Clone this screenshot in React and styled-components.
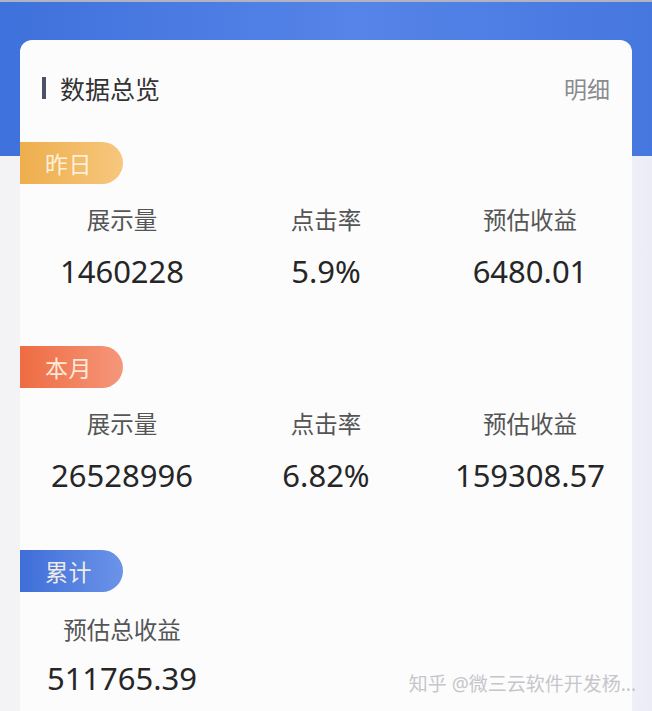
import React from 'react';
import styled, { createGlobalStyle } from 'styled-components';

const GlobalStyle = createGlobalStyle`
  html, body {
    margin: 0;
    padding: 0;
  }
  body {
    font-family: "Noto Sans", "Noto Sans CJK SC", sans-serif;
    background: #f2f2f6;
  }
`;

const Page = styled.div`
  position: relative;
  height: 711px;
  overflow: hidden;
  box-sizing: border-box;
  border-top: 2px solid #aeb4c4;
  background-color: #f3f3f6;
  background-image:
    linear-gradient(90deg, #3f71dc 0%, #5684e8 55%, #4677df 100%),
    linear-gradient(90deg, #f3f3f6 0%, #f6f6f9 90%, #ececf8 100%);
  background-size: 100% 154px, 100% 100%;
  background-position: 0 0, 0 0;
  background-repeat: no-repeat;
  padding: 38px 20px 0;
`;

const Card = styled.div`
  background: #fcfcfd;
  border-radius: 12px 12px 0 0;
  padding-top: 34px;
  min-height: 700px;
`;

const Header = styled.div`
  display: flex;
  align-items: center;
  justify-content: space-between;
  padding: 0 22px;
  height: 28px;
`;

const Title = styled.div`
  display: flex;
  align-items: center;
  gap: 14px;
  font-size: 25px;
  color: #333;

  &::before {
    content: '';
    width: 4px;
    height: 22px;
    background: #4b5266;
  }
`;

const Detail = styled.span`
  font-size: 23px;
  color: #8a8a8e;
`;

const Sections = styled.div`
  display: flex;
  flex-direction: column;
  gap: 55px;
  padding-top: 40px;
`;

const Section = styled.section`
  display: flex;
  flex-direction: column;
`;

const badgeColors = {
  yellow: 'linear-gradient(90deg, #eeae4c, #f6c77e)',
  orange: 'linear-gradient(90deg, #ee6c42, #f5977a)',
  blue: 'linear-gradient(90deg, #3e6ed8, #6b93e8)',
};

const Badge = styled.div`
  width: 103px;
  height: 42px;
  box-sizing: border-box;
  padding-left: 25px;
  display: flex;
  align-items: center;
  border-radius: 0 21px 21px 0;
  background: ${({ $tone }) => badgeColors[$tone]};
  color: rgba(255, 246, 230, 0.92);
  font-size: 23px;
  letter-spacing: 0.5px;
`;

const Stats = styled.div`
  display: grid;
  grid-template-columns: repeat(3, 1fr);
  margin-top: ${({ $top }) => $top || 21}px;
`;

const Stat = styled.div`
  display: flex;
  flex-direction: column;
  align-items: center;
  gap: ${({ $gap }) => $gap || 16}px;
`;

const Label = styled.div`
  font-size: 23.5px;
  line-height: 30px;
  color: #555;
`;

const Value = styled.div`
  font-size: 31px;
  line-height: 40px;
  color: #262626;
`;

const Watermark = styled.div`
  position: absolute;
  right: 16px;
  bottom: 14px;
  font-size: 19px;
  color: #c6c6ca;
  white-space: nowrap;
`;

const groups = [
  {
    name: '昨日',
    tone: 'yellow',
    stats: [
      ['展示量', '1460228'],
      ['点击率', '5.9%'],
      ['预估收益', '6480.01'],
    ],
  },
  {
    name: '本月',
    tone: 'orange',
    stats: [
      ['展示量', '26528996'],
      ['点击率', '6.82%'],
      ['预估收益', '159308.57'],
    ],
  },
];

export default function App() {
  return (
    <>
      <GlobalStyle />
      <Page>
        <Card>
          <Header>
            <Title>数据总览</Title>
            <Detail>明细</Detail>
          </Header>
          <Sections>
            {groups.map((g) => (
              <Section key={g.name}>
                <Badge $tone={g.tone}>{g.name}</Badge>
                <Stats>
                  {g.stats.map(([label, value]) => (
                    <Stat key={label}>
                      <Label>{label}</Label>
                      <Value>{value}</Value>
                    </Stat>
                  ))}
                </Stats>
              </Section>
            ))}
            <Section>
              <Badge $tone="blue">累计</Badge>
              <Stats $top={23}>
                <Stat $gap={13}>
                  <Label>预估总收益</Label>
                  <Value>511765.39</Value>
                </Stat>
              </Stats>
            </Section>
          </Sections>
        </Card>
        <Watermark>知乎 @微三云软件开发杨...</Watermark>
      </Page>
    </>
  );
}
